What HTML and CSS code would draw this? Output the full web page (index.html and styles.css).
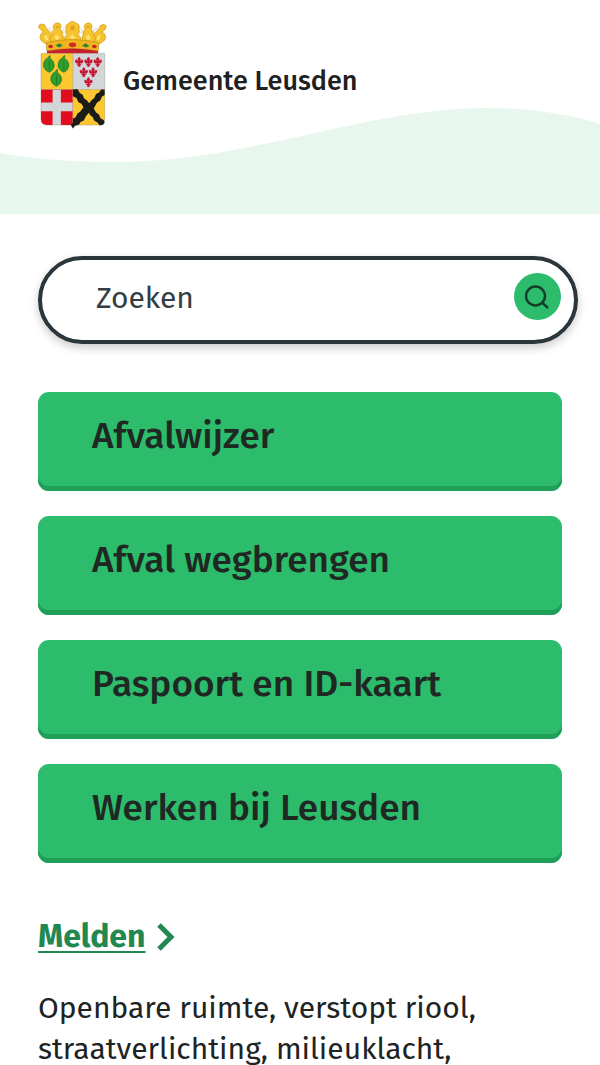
FILE: index.html
```html
<!DOCTYPE html>
<html lang="nl">
    <head>
        <meta charset="utf-8">
        <meta name="viewport" content="width=device-width, initial-scale=1">
        <title>Gemeente Leusden</title>
        <link rel="stylesheet" href="styles.css">
    </head>
    <body>
        <header class="header">
            <svg class="wave" viewBox="0 0 600 106" preserveAspectRatio="none" aria-hidden="true">
                <path d="M0 45C40 52 80 54 115 54C250 54 365 0 488 0C530 0 570 6 600 16V106H0Z"/>
            </svg>
            <a class="logo" href="#">
                <svg class="crest" viewBox="22 30 208 327" aria-hidden="true">
                    <!-- crown -->
                    <g fill="#f6f3ea" stroke="#b9b3a2" stroke-width="1">
                        <circle cx="55" cy="62" r="8"/>
                        <circle cx="104" cy="62" r="8"/>
                        <circle cx="149" cy="62" r="8"/>
                        <circle cx="197" cy="62" r="8"/>
                    </g>
                    <g fill="#f6c32c" stroke="#c9941a" stroke-width="2">
                        <path d="M48 102Q28 94 28 80Q30 68 38 66L30 58Q20 52 26 44Q33 38 42 44L48 56Q58 66 64 72L60 98Z"/>
                        <path d="M204 102Q226 94 226 80Q224 68 214 66L222 60Q230 52 226 45Q218 40 210 46L206 56Q196 66 190 72L194 98Z"/>
                        <path d="M62 96Q54 82 66 72Q64 62 70 58Q64 48 72 41Q82 34 90 42Q94 50 88 58Q98 62 96 74Q104 84 94 94Z"/>
                        <path d="M158 94Q150 84 158 74Q156 62 164 58Q158 50 164 42Q174 34 182 41Q188 48 182 58Q190 62 188 72Q200 82 190 96Z"/>
                        <path d="M102 92Q98 80 110 72Q102 64 108 58Q102 44 114 40Q124 28 136 38Q150 42 145 56Q150 64 142 72Q154 80 150 92Z"/>
                    </g>
                    <path d="M118 52L126 44L134 52L130 60H121ZM74 50L80 46L86 50L80 55ZM167 50L173 46L178 50L173 55Z" fill="#e0a41e"/>
                    <path d="M70 82L80 72L88 82L80 90ZM164 82L174 72L182 82L174 90ZM116 82L126 74L136 82L126 89ZM40 80L48 74L54 88L47 91ZM212 80L204 74L198 88L205 91Z" fill="#ffe070"/>
                    <path d="M47 98Q126 78 206 98L203 124Q126 106 49 124Z" fill="#efb41f" stroke="#c08c15" stroke-width="2"/>
                    <path d="M49 123Q126 107 203 123V130H49Z" fill="#c8202b"/>
                    <path d="M75 106L86 99L97 106L86 112Z M155 106L166 99L177 108L166 112Z" fill="#23843b"/>
                    <ellipse cx="126" cy="104" rx="11" ry="7" fill="#d5282b"/>
                    <ellipse cx="60" cy="109" rx="7" ry="5" fill="#c32522"/>
                    <ellipse cx="192" cy="109" rx="7" ry="5" fill="#c32522"/>
                    <!-- shield -->
                    <path d="M31 130H127V239H31Z" fill="#fdc82f"/>
                    <path d="M127 130H223V239H127Z" fill="#d2d6d9"/>
                    <path d="M31 239H127V346H49Q31 346 31 328Z" fill="#e30b1e"/>
                    <path d="M127 239H223V328Q223 346 205 346H127Z" fill="#fdc82f"/>
                    <path d="M31 278H66V239H91V278H127V304H91V346H66V304H31Z" fill="#d2d6d9"/>
                    <path class="frame" d="M31 130H223V328Q223 346 205 346H49Q31 346 31 328ZM127 130V346M31 239H223"/>
                    <path d="M127 239L141 237L148 249L156 254L161 266L169 271L176 280L184 270L191 265L197 252L206 248L212 239H223V255L215 260L209 273L200 278L190 296L197 308L205 313L211 326L220 331L223 338L218 345L208 347L201 338L192 333L186 321L180 317L175 309L166 320L160 332L151 336L145 345L134 348L127 356L121 346L127 338V326L135 323L141 311L149 306L159 292L153 282L144 277L138 264L127 259Z" fill="#1b1b18"/>
                    <g class="leaf">
                        <path id="leaf" d="M56 137Q54 144 46 147Q36 157 39 171Q46 184 56 187Q68 182 71 168Q71 154 61 147Q56 146 59 137Z"/>
                        <path d="M56 152V181"/>
                        <use href="#leaf" x="44"/>
                        <path d="M100 152V181"/>
                        <use href="#leaf" x="22" y="42"/>
                        <path d="M78 194V223"/>
                    </g>
                    <g fill="#c81432">
                        <path id="lily" d="M146 140L151 147L149 155Q152 147 157 149Q161 155 154 160L149 159V161H153V164H149L151 168L146 171L141 168L143 164H139V161H143V159L138 160Q131 155 135 149Q140 147 143 155L141 147Z"/>
                        <use href="#lily" x="28"/>
                        <use href="#lily" x="56"/>
                        <use href="#lily" x="14" y="31"/>
                        <use href="#lily" x="42" y="31"/>
                        <use href="#lily" x="28" y="61"/>
                    </g>
                </svg>
                <span class="logo-name">Gemeente Leusden</span>
            </a>
        </header>
        <main class="content">
            <form class="search" role="search">
                <input class="search-input" type="search" placeholder="Zoeken" aria-label="Zoeken">
                <button class="search-button" type="submit" aria-label="Zoeken">
                    <svg viewBox="0 0 24 24" aria-hidden="true">
                        <circle cx="9.5" cy="11" r="9.5"/>
                        <path d="M16 17.5L22 23"/>
                    </svg>
                </button>
            </form>
            <nav class="tasks">
                <a class="task" href="#">Afvalwijzer</a>
                <a class="task" href="#">Afval wegbrengen</a>
                <a class="task" href="#">Paspoort en ID-kaart</a>
                <a class="task" href="#">Werken bij Leusden</a>
            </nav>
            <section class="topic">
                <h2 class="topic-title">
                    <a href="#">Melden</a>
                    <svg class="chevron" viewBox="0 0 18 28" aria-hidden="true">
                        <path d="M2 2L14 14L2 26"/>
                    </svg>
                </h2>
                <p class="topic-text">Openbare ruimte, verstopt riool, straatverlichting, milieuklacht,</p>
            </section>
        </main>
    </body>
</html>
```
FILE: styles.css
```css
* {
    box-sizing: border-box;
}
html,
body {
    height: 100%;
}
html {
    overflow: hidden;
}
body {
    margin: 0;
    overflow-y: auto;
    scrollbar-width: none;
    background: #fff;
    color: #202323;
    font-family: "Fira Sans", "Noto Sans", sans-serif;
}
.header {
    position: relative;
    height: 214px;
    padding: 20px 38px;
}
.wave {
    position: absolute;
    left: 0;
    bottom: 0;
    z-index: -1;
    width: 100%;
    height: 106px;
    fill: #e7f7ee;
}
.logo {
    display: flex;
    align-items: center;
    gap: 16px;
    color: #202020;
    text-decoration: none;
}
.crest {
    width: 69px;
    height: 109px;
}
.frame {
    fill: none;
    stroke: #7d745c;
    stroke-width: 1;
}
.leaf {
    fill: #2f9e2f;
    stroke: #1b6f22;
    stroke-width: 2;
}
.logo-name {
    padding-top: 12px;
    font-size: 27px;
    font-weight: 500;
    line-height: 32px;
}
.content {
    padding: 42px 38px 0;
}
.search {
    display: flex;
    align-items: center;
    height: 88px;
    margin-right: -16px;
    padding: 0 13px 0 54px;
    border: 4px solid #2a363b;
    border-radius: 44px;
    background: #fff;
    box-shadow: 0 4px 10px rgba(0, 0, 0, 0.2);
}
.search-input {
    flex: 1;
    min-width: 0;
    margin-bottom: 5px;
    padding: 0;
    border: 0;
    outline: 0;
    background: none;
    color: #2a363b;
    font: 30px/40px "Fira Sans", "Noto Sans", sans-serif;
}
.search-input::placeholder {
    color: #343e42;
    opacity: 1;
}
.search-button {
    display: flex;
    align-items: center;
    justify-content: center;
    width: 47px;
    height: 47px;
    margin-bottom: 7px;
    padding: 0;
    border: 0;
    border-radius: 50%;
    background: #2cbc6c;
}
.search-button svg {
    width: 24px;
    height: 24px;
    overflow: visible;
    fill: none;
    stroke: #173d28;
    stroke-width: 2.4;
}
.tasks {
    display: grid;
    gap: 25px;
    margin-top: 48px;
}
.task {
    height: 99px;
    padding: 20px 54px;
    border-radius: 11px;
    background: #2cbc6c;
    box-shadow: inset 0 -5px #1f9f57;
    color: #202823;
    font-size: 37px;
    font-weight: 500;
    line-height: 48px;
    text-decoration: none;
}
.topic {
    margin-top: 51px;
}
.topic-title {
    display: flex;
    align-items: center;
    gap: 11px;
    margin: 0;
    font-size: 32px;
    line-height: 44px;
}
.topic-title a {
    color: #208850;
    text-decoration-thickness: 2px;
    text-underline-offset: 4px;
}
.chevron {
    width: 18px;
    height: 28px;
    margin-top: 2px;
    fill: none;
    stroke: #208850;
    stroke-width: 5;
}
.topic-text {
    margin: 30px 0 0;
    font-size: 30px;
    line-height: 41px;
}
```
